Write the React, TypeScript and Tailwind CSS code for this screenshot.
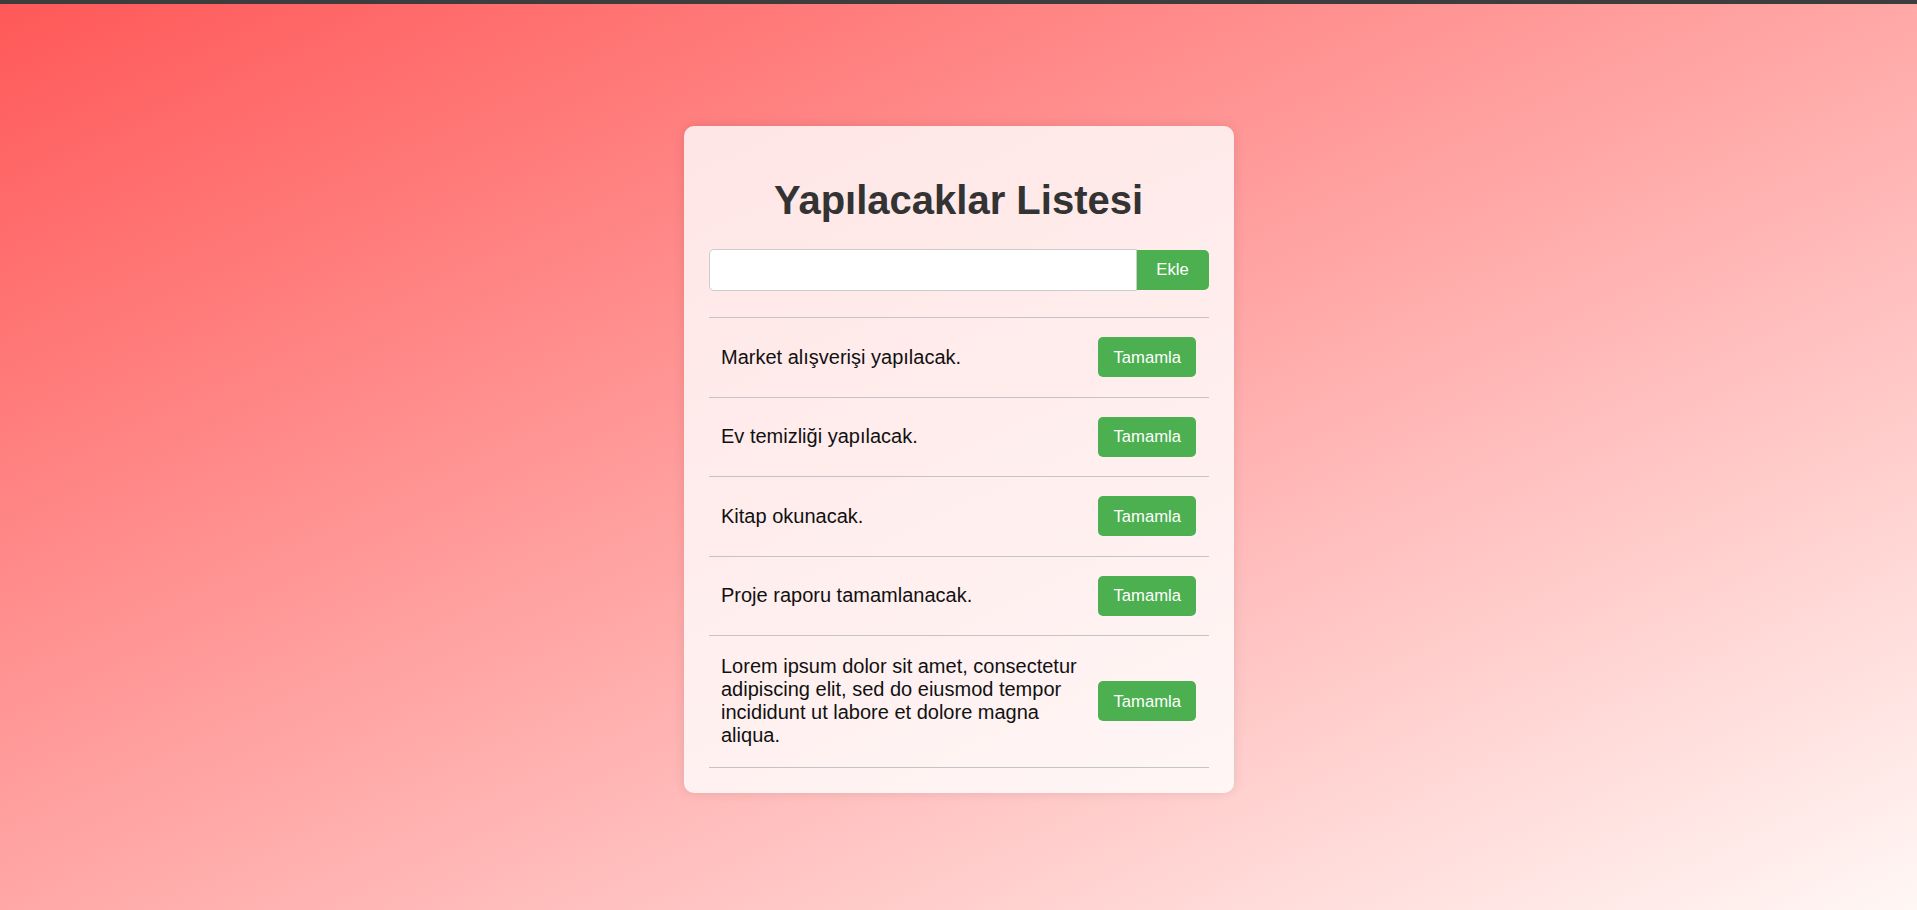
import { useState } from "react";

const initialTodos = [
  "Market alışverişi yapılacak.",
  "Ev temizliği yapılacak.",
  "Kitap okunacak.",
  "Proje raporu tamamlanacak.",
  "Lorem ipsum dolor sit amet, consectetur adipiscing elit, sed do eiusmod tempor incididunt ut labore et dolore magna aliqua.",
];

export default function App() {
  const [todos, setTodos] = useState<string[]>(initialTodos);
  const [text, setText] = useState("");

  const addTodo = () => {
    if (!text.trim()) return;
    setTodos([...todos, text.trim()]);
    setText("");
  };

  return (
    <div className="min-h-[910px] bg-[linear-gradient(to_bottom_right,#ff5858,#fff7f5)] font-['Liberation_Sans',Arial,sans-serif]">
      <div className="h-[4px] bg-[#3d3d3d]" />
      <div className="flex justify-center pt-[122px]">
        <div className="w-[550px] p-[25px] bg-white/80 rounded-[10px] shadow-[0_0_12px_rgba(0,0,0,0.1)]">
          <h1 className="mt-[18.5px] mb-[19px] text-center text-[40px] font-bold leading-normal text-[#333]">
            Yapılacaklar Listesi
          </h1>

          <div className="flex items-center">
            <input
              type="text"
              className="flex-1 h-[42px] px-3 bg-white border border-[#ccc] rounded-l-[5px] text-[17px] outline-none"
              value={text}
              onChange={(e) => setText(e.target.value)}
            />
            <button
              onClick={addTodo}
              className="w-[72px] h-[40px] bg-[#4caf50] text-white text-[16.67px] rounded-r-[5px]"
            >
              Ekle
            </button>
          </div>

          <ul className="mt-[26.5px] border-t border-[#c4c4c4]">
            {todos.map((todo, i) => (
              <li
                key={i}
                className="flex items-center py-[19.25px] px-[12.5px] border-b border-[#c4c4c4]"
              >
                <span className="flex-1 text-[20px] leading-[23px] text-[#111]">{todo}</span>
                <button
                  onClick={() => setTodos(todos.filter((_, j) => j !== i))}
                  className="ml-[12.5px] h-[40px] px-[15px] bg-[#4caf50] text-white text-[16.67px] rounded-[5px]"
                >
                  Tamamla
                </button>
              </li>
            ))}
          </ul>
        </div>
      </div>
    </div>
  );
}
